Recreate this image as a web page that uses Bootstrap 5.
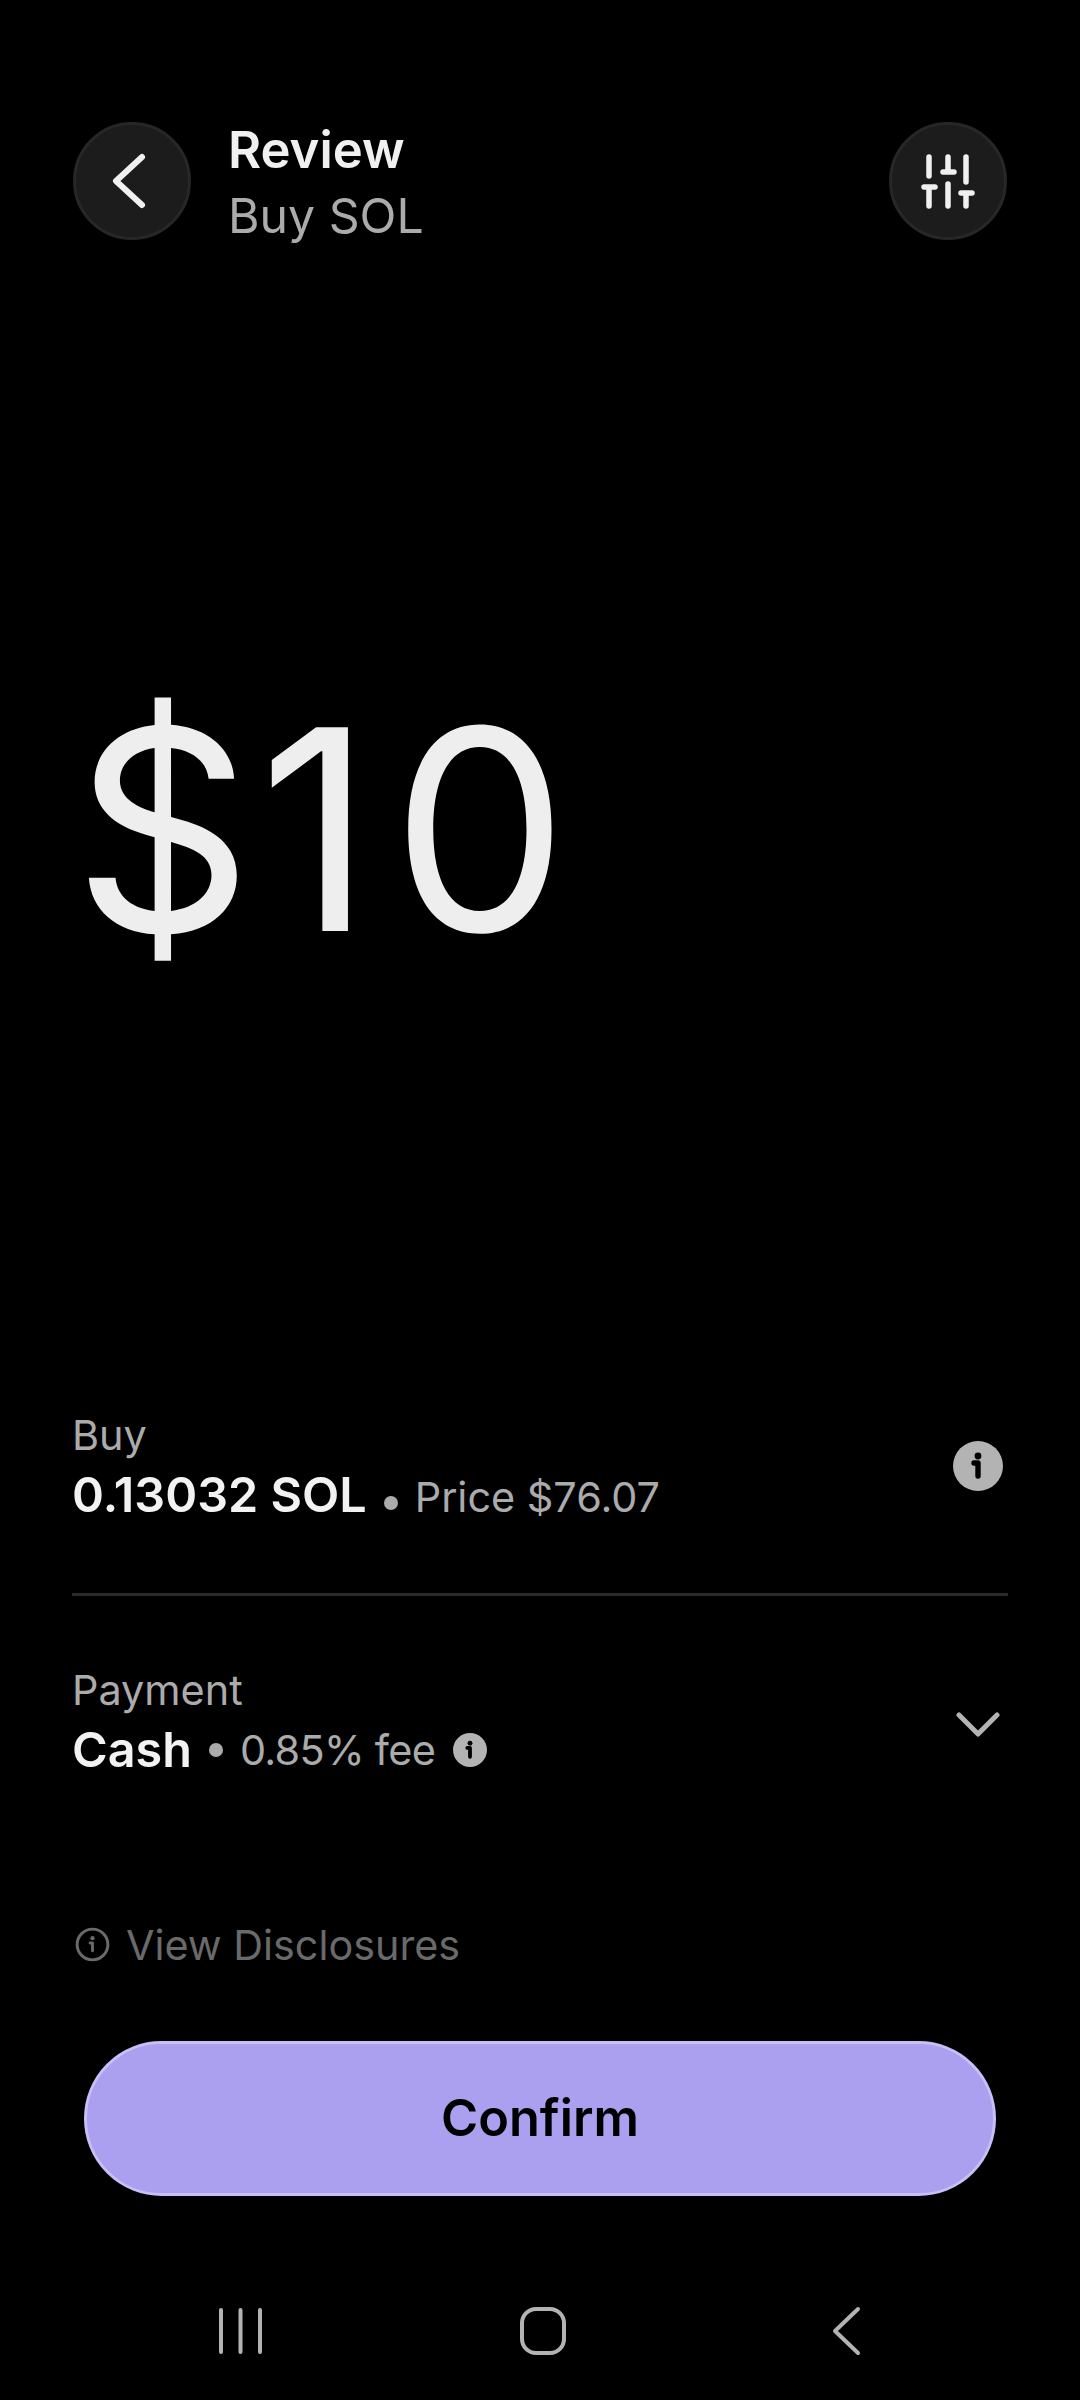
<!DOCTYPE html>
<html lang="en">
<head>
<meta charset="utf-8">
<title>Review</title>
<link href="https://cdn.jsdelivr.net/npm/bootstrap@5.3.0/dist/css/bootstrap.min.css" rel="stylesheet">
<style>
html,body{margin:0;background:#000;}
body{font-family:"Inter","Liberation Sans",sans-serif;color:#f0f0f0;}
.screen{width:1080px;height:2400px;background:#000;padding:122px 72px 0;overflow:hidden;}
.head-bar{margin:0 1px;}
.round-btn{width:118px;height:118px;padding:0;background:#1c1c1c;border:3px solid #272727;flex:none;}
.round-btn:hover,.round-btn:active{background:#1c1c1c;border-color:#272727;}
.head-text{margin-left:37px;}
.head-title{font-size:50.8px;font-weight:600;line-height:66px;margin-top:-5px;}
.head-sub{font-size:48.2px;font-weight:400;line-height:66px;color:#ababab;margin-top:0;}
.amount{font-size:280px;font-weight:400;line-height:360px;margin-top:401px;margin-left:1px;color:#eeeeee;}
.amt-sign{letter-spacing:6px;}
.amt-one{letter-spacing:19px;}
.info-row{margin-top:399.5px;height:126px;}
.row-label{font-size:41.4px;line-height:50px;color:#ababab;}
.row-value{font-size:41.4px;line-height:58px;color:#ababab;margin-top:6px;white-space:nowrap;}
.row-value b{font-size:48.5px;font-weight:600;color:#f2f2f2;}
.dot{display:inline-block;width:14px;height:14px;border-radius:50%;background:#ababab;margin:0 17px 0 17px;vertical-align:2px;}
.info-rule{margin:0;margin-top:57.5px;border:0;border-top:3px solid #2a2a2a;opacity:1;}
.pay-row{margin-top:68.5px;height:126px;}
.info-big{margin-top:31px;margin-right:5px;}
.pay-chevron{margin-top:46px;margin-right:8px;}
.fee-text{letter-spacing:-.7px;}
.fee-icon{margin-left:18px;}
.disclosure{margin-top:129px;font-size:41.3px;line-height:50px;color:#6a6a6a;}
.disclosure svg{margin-left:3px;margin-right:16px;}
.confirm{display:block;width:912px;height:155px;margin:71.5px 0 0 12px;background:#aba0f0;border:3px solid #c7bff6;border-radius:78px;color:#000;font-size:50.5px;font-weight:600;line-height:1;}
.confirm:hover,.confirm:active{background:#aba0f0;border-color:#c7bff6;color:#000;}
.sysnav{margin:110px 0 0 0;height:50px;}
.sysnav svg{flex:none;}
.nav-a{margin-left:145px;}
.nav-b{margin-left:255px;}
.nav-c{margin-left:266px;}
</style>
</head>
<body>
<div class="screen d-flex flex-column">
  <div class="head-bar d-flex align-items-start">
    <button class="btn round-btn rounded-circle d-flex align-items-center justify-content-center" aria-label="Back">
      <svg width="60" height="60" viewBox="0 0 60 60" fill="none" stroke="#f0f0f0" stroke-width="6" stroke-linecap="round" stroke-linejoin="round"><path d="M40 6 14 30l26 24"/></svg>
    </button>
    <div class="head-text flex-grow-1">
      <div class="head-title">Review</div>
      <div class="head-sub">Buy SOL</div>
    </div>
    <button class="btn round-btn rounded-circle d-flex align-items-center justify-content-center" aria-label="Settings">
      <svg width="60" height="60" viewBox="0 0 60 60" fill="none" stroke="#f0f0f0" stroke-width="5.5" stroke-linecap="round"><path d="M11 6v19M6 36h11M11 36v19M30 6v15M25 21h11M30 33v22M48 6v25M43 42h11M48 42v13"/></svg>
    </button>
  </div>

  <div class="amount"><span class="amt-sign">$</span><span class="amt-one">1</span>0</div>

  <div class="info-row d-flex justify-content-between align-items-start">
    <div>
      <div class="row-label">Buy</div>
      <div class="row-value"><b>0.13032 SOL</b><span class="dot"></span>Price $76.07</div>
    </div>
    <svg class="info-big" width="50" height="50" viewBox="0 0 50 50"><circle cx="25" cy="25" r="25" fill="#b3b3b3"/><circle cx="25" cy="15" r="3.4" fill="#000"/><path d="M21 22h4v13" fill="none" stroke="#000" stroke-width="5.4" stroke-linecap="round" stroke-linejoin="round"/></svg>
  </div>
  <hr class="info-rule">

  <div class="pay-row d-flex justify-content-between align-items-start">
    <div>
      <div class="row-label">Payment</div>
      <div class="row-value d-flex align-items-center"><b>Cash</b><span class="dot"></span><span class="fee-text">0.85% fee</span><svg class="fee-icon" width="34" height="34" viewBox="0 0 50 50"><circle cx="25" cy="25" r="25" fill="#b3b3b3"/><circle cx="25" cy="15" r="3.6" fill="#000"/><path d="M21 22h4v13" fill="none" stroke="#000" stroke-width="5.6" stroke-linecap="round" stroke-linejoin="round"/></svg></div>
    </div>
    <svg class="pay-chevron" width="44" height="28" viewBox="0 0 44 28" fill="none" stroke="#b3b3b3" stroke-width="5" stroke-linecap="round" stroke-linejoin="round"><path d="M3 4l19 19L41 4"/></svg>
  </div>

  <div class="disclosure d-flex align-items-center">
    <svg width="35" height="35" viewBox="0 0 36 36" fill="none"><circle cx="18" cy="18" r="15.800" stroke="#6a6a6a" stroke-width="3"/><circle cx="18" cy="11.500" r="2.200" fill="#6a6a6a"/><path d="M15.500 16.500H18v8" stroke="#6a6a6a" stroke-width="3" stroke-linecap="round" stroke-linejoin="round"/></svg>
    <span>View Disclosures</span>
  </div>

  <button class="btn confirm">Confirm</button>

  <div class="sysnav d-flex align-items-center">
    <svg class="nav-a" width="48" height="48" viewBox="0 0 48 48" fill="none" stroke="#b3b3b3" stroke-width="4" stroke-linecap="round"><path d="M4 3v42M23.500 3v42M43 3v42"/></svg>
    <svg class="nav-b" width="46" height="48" viewBox="0 0 46 48"><rect x="2" y="2" width="42" height="44" rx="14" fill="none" stroke="#b3b3b3" stroke-width="4"/></svg>
    <svg class="nav-c" width="29" height="50" viewBox="0 0 29 50" fill="none" stroke="#b3b3b3" stroke-width="4" stroke-linecap="round" stroke-linejoin="round"><path d="M26 3 3 25l23 22"/></svg>
  </div>
</div>
<script src="https://cdn.jsdelivr.net/npm/bootstrap@5.3.0/dist/js/bootstrap.bundle.min.js"></script>
</body>
</html>
